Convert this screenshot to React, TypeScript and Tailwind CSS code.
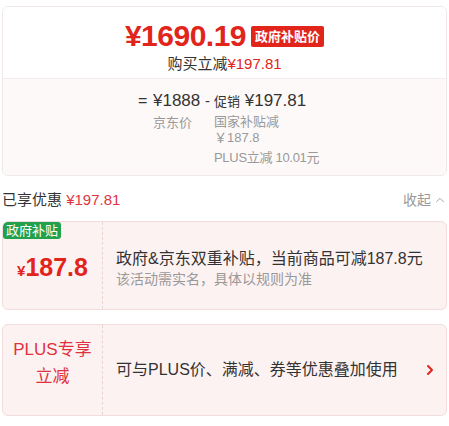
import { ChevronRight, ChevronUp } from "lucide-react";

const FONT = { fontFamily: '"Liberation Sans", "Noto Sans CJK SC", sans-serif' };

function PriceSummary() {
  return (
    <div className="mt-[6px] h-[170px] rounded-md border border-[#f0e8e8] overflow-hidden flex flex-col">
      <div className="h-[72px] bg-white flex flex-col items-center pt-[14px] border-b border-[#f3ecec]">
        <div className="flex items-center gap-[5px] h-[30px]">
          <span className="text-[30px] font-bold text-[#e1251b] leading-none tracking-[-0.5px]">
            ¥1690.19
          </span>
          <span className="bg-[#e1251b] text-white text-[13px] font-bold leading-[21px] px-[4px] rounded-[2px]">
            政府补贴价
          </span>
        </div>
        <div className="mt-[3px] text-[15px] leading-[20px] text-[#333]">
          购买立减<span className="text-[#e1251b]">¥197.81</span>
        </div>
      </div>
      <div className="flex-1 bg-[#fdf9f8] flex pl-[135px] pt-[11px]">
        <div className="w-[15px] text-[16px] leading-[22px] text-[#333]">=</div>
        <div className="w-[61px] flex flex-col">
          <div className="text-[17px] leading-[22px] text-[#333] whitespace-nowrap">
            ¥1888 <span className="text-[15px]">-</span>
          </div>
          <div className="mt-[2px] text-[13px] leading-[18px] text-[#999]">京东价</div>
        </div>
        <div className="flex flex-col">
          <div className="text-[17px] leading-[22px] text-[#333] whitespace-nowrap">
            <span className="text-[13px]">促销</span> ¥197.81
          </div>
          <div className="mt-[1px] text-[13px] leading-[16px] text-[#999]">国家补贴减</div>
          <div className="text-[13px] leading-[15px] text-[#999]">￥187.8</div>
          <div className="mt-[4px] text-[13px] leading-[18px] text-[#999] tracking-[-0.3px]">PLUS立减 10.01元</div>
        </div>
      </div>
    </div>
  );
}

export default function App() {
  return (
    <div className="w-[449px] h-[426px] bg-white px-[2px] overflow-hidden" style={FONT}>
      <PriceSummary />

      <div className="h-[45px] flex items-center justify-between pt-[3px]">
        <div className="text-[15px] text-[#333]">
          已享优惠 <span className="text-[#e0353f]">¥197.81</span>
        </div>
        <div className="flex items-center gap-[2px] text-[14px] text-[#999]">
          收起
          <ChevronUp size={14} strokeWidth={1.5} />
        </div>
      </div>

      <div className="h-[89px] flex rounded-md border border-[#f3dcdc] bg-[#fdf2f2] overflow-hidden">
        <div className="w-[100px] relative flex items-center justify-center border-r border-dashed border-[#ead3d3]">
          <span className="absolute left-0 top-0 bg-[#22a04b] text-white text-[13px] leading-[17px] px-[3px] rounded-[3px]">
            政府补贴
          </span>
          <div className="text-[#e1251b] font-bold mt-[4px] whitespace-nowrap">
            <span className="text-[15px]">¥</span>
            <span className="text-[25px]">187.8</span>
          </div>
        </div>
        <div className="flex-1 flex flex-col justify-center pl-[13px] pt-[6px]">
          <div className="text-[16px] leading-[20px] text-[#333]">
            政府&amp;京东双重补贴，当前商品可减187.8元
          </div>
          <div className="text-[14px] leading-[20px] text-[#999]">该活动需实名，具体以规则为准</div>
        </div>
      </div>

      <div className="mt-[14px] h-[92px] flex rounded-md border border-[#f3dcdc] bg-[#fdf2f2] overflow-hidden">
        <div className="w-[100px] flex flex-col items-center justify-center border-r border-dashed border-[#ead3d3] text-[17px] leading-[27px] text-[#e0323e] pb-[14px]">
          <span>PLUS专享</span>
          <span>立减</span>
        </div>
        <div className="flex-1 flex items-center justify-between pl-[13px] pr-[8px]">
          <span className="text-[16px] text-[#333]">可与PLUS价、满减、券等优惠叠加使用</span>
          <ChevronRight size={16} strokeWidth={3} className="text-[#e1251b]" />
        </div>
      </div>
    </div>
  );
}
